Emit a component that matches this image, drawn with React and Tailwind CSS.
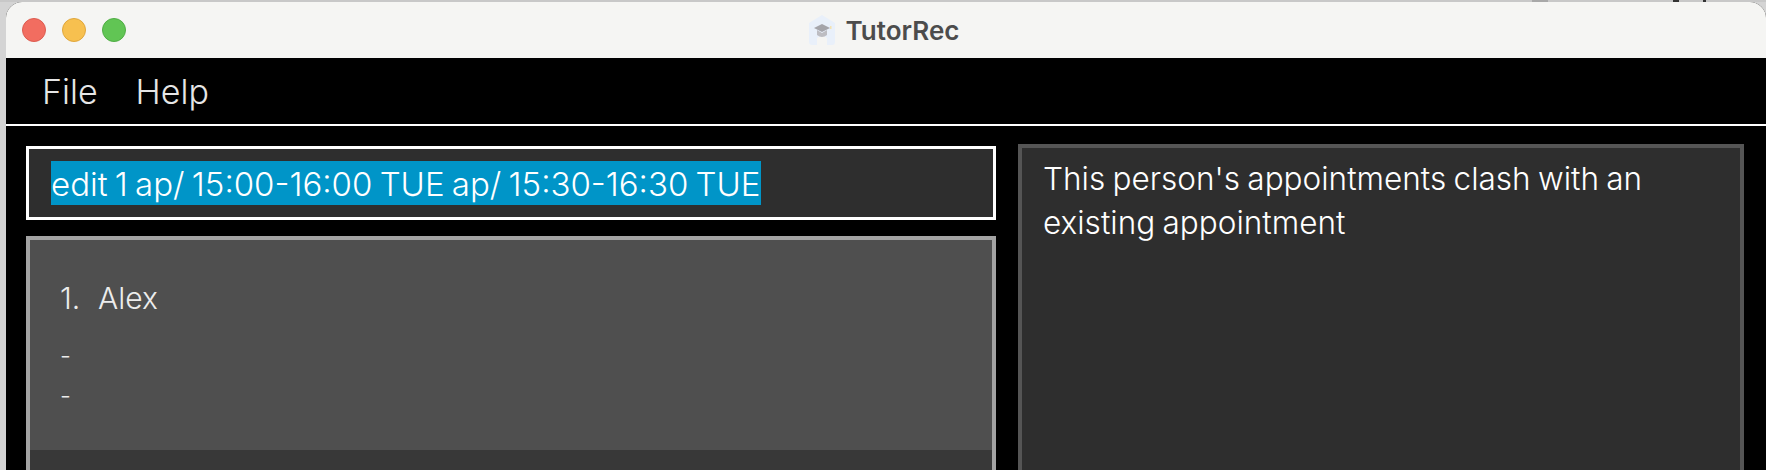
const font = { fontFamily: "Inter, 'Noto Sans', sans-serif" };

function Logo() {
  return (
    <svg width="26" height="30" viewBox="0 0 26 30" className="mr-[11px] blur-[0.4px]">
      <path d="M13 0 L26 8 V27 Q26 30 23 30 H18 V23 Q13 19 8 23 V30 H3 Q0 30 0 27 V8 Z" fill="#e9f0fa" />
      <path d="M5 13 L13 9 L21 13 L13 17 Z" fill="#a5a5aa" />
      <path d="M8 15 V20 Q13 24 18 20 V15 L13 18 Z" fill="#bdbdc2" />
      <rect x="21" y="11" width="1.5" height="3" fill="#f3e2b0" />
    </svg>
  );
}

export default function App() {
  return (
    <div className="w-[1766px] h-[470px] overflow-hidden bg-[#d4d4d4]" style={font}>
      {/* bit of desktop showing above the window */}
      <div className="h-[2px] flex bg-[#c8c8c8]">
        <div className="w-[1532px]" />
        <div className="w-[16px] bg-[#a8a8a8]" />
        <div className="w-[125px]" />
        <div className="w-[6px] bg-[#333333]" />
        <div className="w-[24px]" />
        <div className="w-[3px] bg-[#333333]" />
      </div>
      <div className="h-[468px] ml-[6px] flex flex-col bg-black rounded-t-[16px] overflow-hidden">
        <div className="h-[56px] shrink-0 relative flex items-center justify-center bg-[#f5f5f3] pr-[4px]">
          <div className="absolute left-[16px] top-[16px] flex gap-[16px]">
            <div className="w-[24px] h-[24px] rounded-full bg-[#f26d60] border border-[#dc5c50]" />
            <div className="w-[24px] h-[24px] rounded-full bg-[#f7c04f] border border-[#dfa63c]" />
            <div className="w-[24px] h-[24px] rounded-full bg-[#61c554] border border-[#50ad45]" />
          </div>
          <div className="flex items-center">
            <Logo />
            <span className="text-[26px] font-semibold text-[#4c4c4c]">TutorRec</span>
          </div>
        </div>
        <div className="h-[66px] shrink-0 flex items-center gap-[38px] pl-[36px] pt-[1px] text-[34px] font-light text-[#e6e6e6]">
          <span>File</span>
          <span>Help</span>
        </div>
        <div className="h-[2px] shrink-0 bg-white" />
        <div className="flex-1 min-h-0 flex gap-[22px] pl-[20px] pr-[22px] pt-[18px]">
          <div className="w-[970px] shrink-0 pt-[2px] flex flex-col gap-[16px]">
            <div className="h-[74px] shrink-0 flex items-center pl-[22px] border-[3px] border-white bg-[#2e2e2e]">
              <span className="bg-[#0095c8] h-[44px] leading-[46px] text-[33px] font-light text-white [word-spacing:-2px] whitespace-pre">
                edit 1 ap/ 15:00-16:00 TUE ap/ 15:30-16:30 TUE
              </span>
            </div>
            <div className="flex-1 border-4 border-b-0 border-[#a3a3a3] bg-[#383838]">
              <div className="h-[210px] bg-[#4f4f4f] pl-[30px] pt-[40px] text-[#ececec] font-light">
                <div className="text-[30px] leading-[36px] flex">
                  <span className="w-[38px]">1.</span>
                  <span>Alex</span>
                </div>
                <div className="mt-[20px] text-[24px] leading-[40px]">-</div>
                <div className="text-[24px] leading-[40px]">-</div>
              </div>
            </div>
          </div>
          <div className="flex-1 border-4 border-b-0 border-[#555555] bg-[#2e2e2e] pl-[21px] pt-[9px] pr-[20px] text-[31.5px] leading-[44px] font-light text-white [word-spacing:-1.5px]">
            This person's appointments clash with an
            <br />
            existing appointment
          </div>
        </div>
      </div>
    </div>
  );
}
